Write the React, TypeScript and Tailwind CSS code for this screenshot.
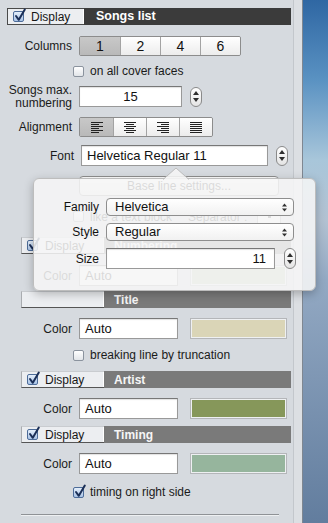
import React from "react";

const CheckBox = ({ checked = false }: { checked?: boolean }) => (
  <span
    className={`relative inline-block shrink-0 w-[11px] h-[11px] rounded-[2px] border ${
      checked
        ? "border-[#4d6c99] bg-gradient-to-b from-[#e4eefa] to-[#a9c3e6]"
        : "border-[#8b939e] bg-gradient-to-b from-white to-[#e2e5e9]"
    }`}
  >
    {checked && (
      <svg className="absolute -top-[4px] -left-[1px]" width="14" height="15" viewBox="0 0 14 15">
        <path
          d="M3 8 L5.8 11.8 L11.8 1.5"
          fill="none"
          stroke="#1b2f57"
          strokeWidth="2"
          strokeLinecap="round"
          strokeLinejoin="round"
        />
      </svg>
    )}
  </span>
);

const Header = ({
  title,
  checkbox = true,
  top = false,
}: {
  title: string;
  checkbox?: boolean;
  top?: boolean;
}) => (
  <div className={`flex h-[17px] ${top ? "ml-[7px] w-[284px]" : "ml-[21px] w-[270px]"}`}>
    <div
      className={`flex items-center gap-[7px] pl-[5px] bg-[#eceef1] border border-r-0 shadow-[inset_-1px_0_0_#ffffff] ${
        top
          ? "w-[77px] border-[#4a4a4a]"
          : "w-[83px] border-t-[#c9ccd0] border-l-[#a9acb0] border-b-[#555555]"
      }`}
    >
      {checkbox && (
        <>
          <CheckBox checked />
          <span className="text-[12px] leading-none text-[#161616]">Display</span>
        </>
      )}
    </div>
    <div
      className={`flex-1 flex items-center font-bold leading-none ${
        top
          ? "pl-[12px] bg-[#3b3b3b] text-white text-[12.5px]"
          : "pl-[10px] bg-[#7a7a7a] text-[#f6f6f6] text-[12px]"
      }`}
    >
      {title}
    </div>
  </div>
);

const Stepper = ({ h = 20 }: { h?: number }) => (
  <div
    className={`w-[12px] ${h === 21 ? "h-[21px]" : "h-[20px]"} rounded-[6px] border border-[#8a8a8a] bg-gradient-to-b from-white to-[#e4e4e4] flex flex-col items-center justify-center gap-[3px]`}
  >
    <svg width="6" height="4" viewBox="0 0 6 4">
      <path d="M0 4 L3 0 L6 4Z" fill="#2e2e2e" />
    </svg>
    <svg width="6" height="4" viewBox="0 0 6 4">
      <path d="M0 0 L3 4 L6 0Z" fill="#2e2e2e" />
    </svg>
  </div>
);

const TextField = ({
  value,
  w,
  right = false,
  center = false,
}: {
  value: string;
  w: string;
  right?: boolean;
  center?: boolean;
}) => (
  <div
    className={`${w} h-[21px] bg-white border border-[#999] border-t-[#777] shadow-[inset_0_1px_1px_rgba(0,0,0,0.12)] flex items-center text-[13px] text-[#111] ${
      right ? "justify-end pr-[8px]" : center ? "justify-center" : "pl-[5px]"
    }`}
  >
    {value}
  </div>
);

const Segmented = ({
  items,
  seg,
  selected,
}: {
  items: React.ReactNode[];
  seg: string;
  selected: number;
}) => (
  <div className="flex h-[20px] border border-[#8c8c8c] rounded-[2px] overflow-hidden">
    {items.map((it, i) => (
      <div
        key={i}
        className={`${seg} flex items-center justify-center text-[14px] text-[#111] ${
          i > 0 ? "border-l border-[#a3a3a3]" : ""
        } ${
          i === selected
            ? "bg-gradient-to-b from-[#c8c8c8] to-[#b9b9b9]"
            : "bg-gradient-to-b from-white to-[#ececec]"
        }`}
      >
        {it}
      </div>
    ))}
  </div>
);

const AlignIcon = ({ kind }: { kind: "left" | "center" | "right" | "justify" }) => {
  const widths = kind === "justify" ? [12, 12, 12, 12, 12, 12] : [12, 8, 12, 8, 12, 8];
  return (
    <svg width="12" height="11" viewBox="0 0 12 11">
      {widths.map((w, i) => {
        const x = kind === "left" || kind === "justify" ? 0 : kind === "right" ? 12 - w : (12 - w) / 2;
        return <rect key={i} x={x} y={i * 2} width={w} height="1" fill="#222" />;
      })}
    </svg>
  );
};

const ColorRow = ({ swatch }: { swatch: string }) => (
  <div className="flex items-center h-[21px]">
    <div className="w-[72px] text-right text-[12px] text-[#1a1a1a]">Color</div>
    <div className="ml-[7px]">
      <TextField value="Auto" w="w-[99px]" />
    </div>
    <div className="ml-[12px] w-[97px] h-[21px] border border-[#b4b6b9] p-[1px] bg-[#eef0f2]">
      <div className={`w-full h-full ${swatch}`} />
    </div>
  </div>
);

const Select = ({ value }: { value: string }) => (
  <div className="w-[188px] h-[18px] rounded-[4px] border border-[#8e8e8e] bg-gradient-to-b from-white to-[#f1f1f1] flex items-center justify-between pl-[8px] pr-[6px] text-[13px] text-[#111]">
    <span>{value}</span>
    <svg width="5" height="9" viewBox="0 0 5 9">
      <path d="M0 3.5 L2.5 0.5 L5 3.5Z M0 5.5 L2.5 8.5 L5 5.5Z" fill="#333" />
    </svg>
  </div>
);

const Popup = () => (
  <div className="absolute left-[33px] top-[178px] w-[283px] h-[113px] rounded-[6px] border border-[#bdbdbd] bg-[rgba(246,246,246,0.87)] shadow-[0_3px_10px_rgba(0,0,0,0.25)]">
    <svg className="absolute left-[129px] -top-[12px]" width="26" height="13" viewBox="0 0 26 13">
      <path d="M0 13 L13 1 L26 13Z" fill="rgba(246,246,246,0.87)" />
      <path d="M0 12.5 L13 1 L26 12.5" fill="none" stroke="#bdbdbd" />
    </svg>
    <div className="flex flex-col pt-[19px]">
      <div className="flex items-center">
        <div className="w-[65px] text-right text-[12px] text-[#111]">Family</div>
        <div className="ml-[7px]">
          <Select value="Helvetica" />
        </div>
      </div>
      <div className="flex items-center mt-[7px]">
        <div className="w-[65px] text-right text-[12px] text-[#111]">Style</div>
        <div className="ml-[7px]">
          <Select value="Regular" />
        </div>
      </div>
      <div className="flex items-center mt-[7px]">
        <div className="w-[65px] text-right text-[12px] text-[#111]">Size</div>
        <div className="ml-[7px]">
          <TextField value="11" w="w-[169px]" right />
        </div>
        <div className="ml-[9px]">
          <Stepper h={21} />
        </div>
      </div>
    </div>
  </div>
);

export default function App() {
  return (
    <div className="relative w-[328px] h-[523px] overflow-hidden flex font-['Liberation_Sans',Arial,sans-serif]">
      <div className="w-[303px] h-full bg-[#dcdfe3] border-r border-[#7f8791] flex">
        <div className="w-[294px] h-full flex flex-col bg-[#d6dadf] border-r border-[#c3c7cc]">
          <div className="mt-[8px]">
            <Header title="Songs list" top />
          </div>

          <div className="mt-[11px] flex items-center h-[20px]">
            <div className="w-[72px] text-right text-[12px] text-[#1a1a1a]">Columns</div>
            <div className="ml-[7px]">
              <Segmented items={["1", "2", "4", "6"]} seg="w-[40px]" selected={0} />
            </div>
          </div>

          <div className="mt-[9px] h-[12px] pl-[73px] flex items-center gap-[6px] text-[12px] text-[#1a1a1a]">
            <CheckBox />
            <span>on all cover faces</span>
          </div>

          <div className="mt-[6px] h-[27px] flex items-center">
            <div className="w-[72px] text-right text-[12px] leading-[13px] text-[#1a1a1a]">
              Songs max.
              <br />
              numbering
            </div>
            <div className="ml-[7px]">
              <TextField value="15" w="w-[103px]" center />
            </div>
            <div className="ml-[8px]">
              <Stepper />
            </div>
          </div>

          <div className="mt-[7px] flex items-center h-[20px]">
            <div className="w-[72px] text-right text-[12px] text-[#1a1a1a]">Alignment</div>
            <div className="ml-[7px]">
              <Segmented
                items={[
                  <AlignIcon kind="left" />,
                  <AlignIcon kind="center" />,
                  <AlignIcon kind="right" />,
                  <AlignIcon kind="justify" />,
                ]}
                seg="w-[33px]"
                selected={0}
              />
            </div>
          </div>

          <div className="mt-[8px] flex items-center h-[21px]">
            <div className="w-[74px] text-right text-[12px] text-[#1a1a1a]">Font</div>
            <div className="ml-[7px]">
              <TextField value="Helvetica Regular 11" w="w-[187px]" />
            </div>
            <div className="ml-[8px]">
              <Stepper />
            </div>
          </div>

          <div className="mt-[10px] ml-[79px] w-[200px] h-[20px] rounded-[4px] border border-[#8e8e8e] bg-gradient-to-b from-white to-[#ececec] flex items-center justify-center text-[12px] text-[#1a1a1a]">
            Base line settings...
          </div>

          <div className="mt-[14px] h-[13px] pl-[73px] flex items-center text-[12px] text-[#1a1a1a]">
            <CheckBox />
            <span className="ml-[6px]">like a text block</span>
            <span className="ml-[16px]">Separator :</span>
            <div className="ml-[10px] w-[24px] h-[14px] border border-[#999] bg-white flex items-center justify-center">
              <div className="w-[3px] h-[3px] bg-[#333]" />
            </div>
          </div>

          <div className="mt-[14px]">
            <Header title="Numbering" />
          </div>
          <div className="mt-[11px]">
            <ColorRow swatch="bg-[#b7c7a9]" />
          </div>

          <div className="mt-[5px]">
            <Header title="Title" checkbox={false} />
          </div>
          <div className="mt-[10px]">
            <ColorRow swatch="bg-[#dad5b7]" />
          </div>
          <div className="mt-[10px] h-[12px] pl-[73px] flex items-center gap-[6px] text-[12px] text-[#1a1a1a]">
            <CheckBox />
            <span>breaking line by truncation</span>
          </div>

          <div className="mt-[10px]">
            <Header title="Artist" />
          </div>
          <div className="mt-[10px]">
            <ColorRow swatch="bg-[#86975a]" />
          </div>

          <div className="mt-[7px]">
            <Header title="Timing" />
          </div>
          <div className="mt-[10px]">
            <ColorRow swatch="bg-[#96b59d]" />
          </div>
          <div className="mt-[12px] h-[12px] pl-[73px] flex items-center gap-[6px] text-[12px] text-[#1a1a1a]">
            <CheckBox checked />
            <span>timing on right side</span>
          </div>

          <div className="mt-[16px] ml-[21px] w-[258px] h-[2px] border-t border-[#8f9296] border-b border-b-[#eef0f2]" />
        </div>
      </div>

      <div className="flex-1 h-full flex flex-col">
        <div className="h-[160px] bg-linear-to-b from-[#2f67a3] via-[#5a92c2] to-[#a8c6da]" />
        <div className="h-[120px] bg-linear-to-b from-[#a8c6da] via-[#b3c2d2] to-[#93a9c3]" />
        <div className="flex-1 bg-linear-to-b from-[#93a9c3] to-[#627d9e]" />
      </div>

      <Popup />
    </div>
  );
}
